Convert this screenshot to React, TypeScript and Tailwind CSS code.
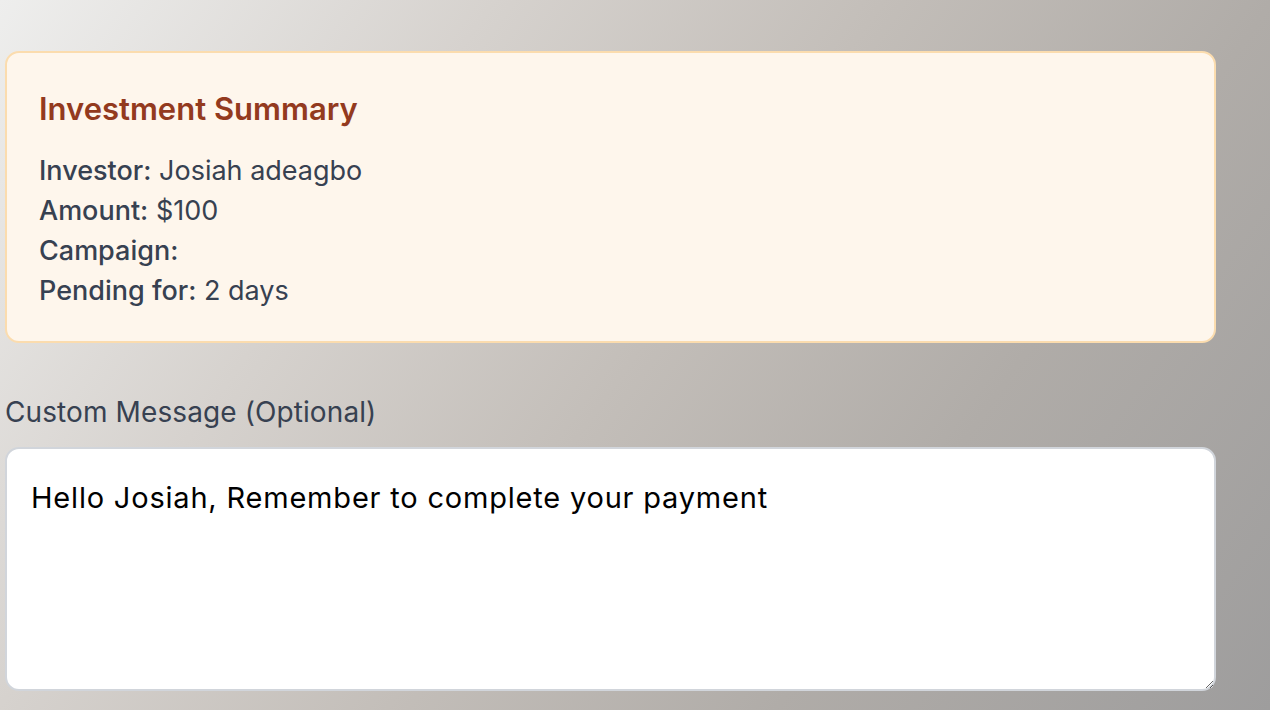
import React from "react";

export default function App() {
  return (
    <div
      className="w-[1270px] h-[710px] overflow-hidden bg-[linear-gradient(125deg,#eeeeed_0%,#d6d2ce_28%,#c3beb9_50%,#b0aca8_72%,#9e9d9d_100%)] pl-[5px] pt-[51px]"
      style={{ fontFamily: "Inter, 'Noto Sans', sans-serif" }}
    >
      <div className="w-[1211px] rounded-[14px] border-2 border-[#fbdcae] bg-[#fef6ec] px-[32px] pt-[36px] pb-[30px]">
        <h2 className="text-[31px] leading-[40px] font-semibold text-[#933a1e] mb-[22px]">Investment Summary</h2>
        <div className="text-[27px] leading-[40px] text-[#374151]">
          <p><span className="font-[460]">Investor:</span> Josiah adeagbo</p>
          <p><span className="font-[460]">Amount:</span> $100</p>
          <p><span className="font-[460]">Campaign:</span> </p>
          <p><span className="font-[460]">Pending for:</span> 2 days</p>
        </div>
      </div>
      <label className="block mt-[49px] text-[28px] leading-[40px] text-[#374151] font-normal tracking-[0.1px]">Custom Message (Optional)</label>
      <textarea
        readOnly
        defaultValue="Hello Josiah, Remember to complete your payment"
        className="mt-[15px] block w-[1211px] h-[244px] rounded-[14px] border-2 border-[#d1d5db] bg-white pl-[24px] pr-[24px] pt-[29px] pb-[10px] text-[29px] leading-[40px] tracking-[0.8px] text-black outline-none"
        style={{ fontFamily: "Inter, 'Noto Sans', sans-serif" }}
      />
    </div>
  );
}
